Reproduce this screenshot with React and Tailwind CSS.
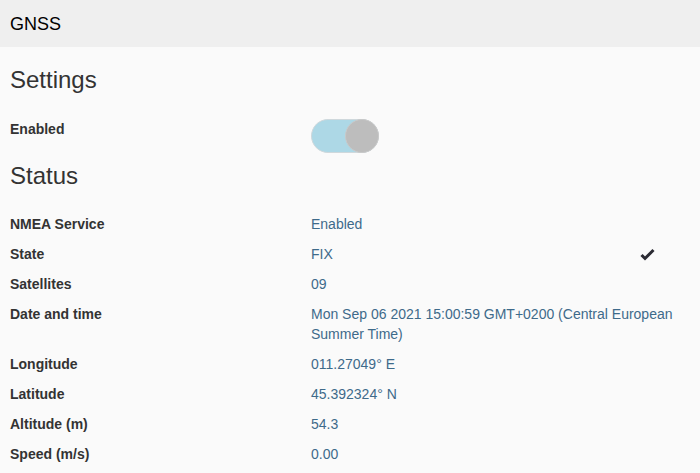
import React from "react";

const rows = [
  { label: "NMEA Service", value: "Enabled" },
  { label: "State", value: "FIX", ok: true },
  { label: "Satellites", value: "09" },
  { label: "Date and time", value: "Mon Sep 06 2021 15:00:59 GMT+0200 (Central European Summer Time)" },
  { label: "Longitude", value: "011.27049° E" },
  { label: "Latitude", value: "45.392324° N" },
  { label: "Altitude (m)", value: "54.3" },
  { label: "Speed (m/s)", value: "0.00" },
];

function Check() {
  return (
    <svg width="15" height="13" viewBox="0 0 15 13" className="block">
      <path d="M1.5 7 L5 10.5 L13.5 2" fill="none" stroke="#2b2b33" strokeWidth="3" strokeLinecap="butt" />
    </svg>
  );
}

function Toggle({ on }) {
  return (
    <div className="w-[68px] h-[34px] rounded-full bg-[#add8e6] border border-[#cfd8dc] flex justify-end">
      <div className="w-[34px] h-[34px] -m-px rounded-full bg-[#bdbdbd] border border-[#c9c9c9]" />
    </div>
  );
}

export default function App() {
  return (
    <div className="min-h-[473px] bg-[#fafafa] text-[#333] text-[14px] leading-[20px] font-['Liberation_Sans',Arial,sans-serif]">
      <div className="h-[47px] bg-[#efefef] px-[10px] flex items-center text-[18px] text-black">GNSS</div>
      <div className="px-[10px]">
        <h3 className="mt-[20px] text-[24px] leading-[26px]">Settings</h3>
        <div className="mt-[26px] grid grid-cols-[301px_1fr]">
          <div className="font-bold">Enabled</div>
          <div>
            <Toggle on />
          </div>
        </div>
        <h3 className="mt-[10px] text-[24px] leading-[26px]">Status</h3>
        <div className="mt-[25px] flex flex-col gap-[10px]">
          {rows.map((r) => (
            <div key={r.label} className="grid grid-cols-[301px_1fr]">
              <div className="font-bold">{r.label}</div>
              <div className="flex items-center text-[#3e6a8a]">
                <span className="flex-1">{r.value}</span>
                {r.ok ? (
                  <span className="mr-[35px]">
                    <Check />
                  </span>
                ) : null}
              </div>
            </div>
          ))}
        </div>
      </div>
    </div>
  );
}
